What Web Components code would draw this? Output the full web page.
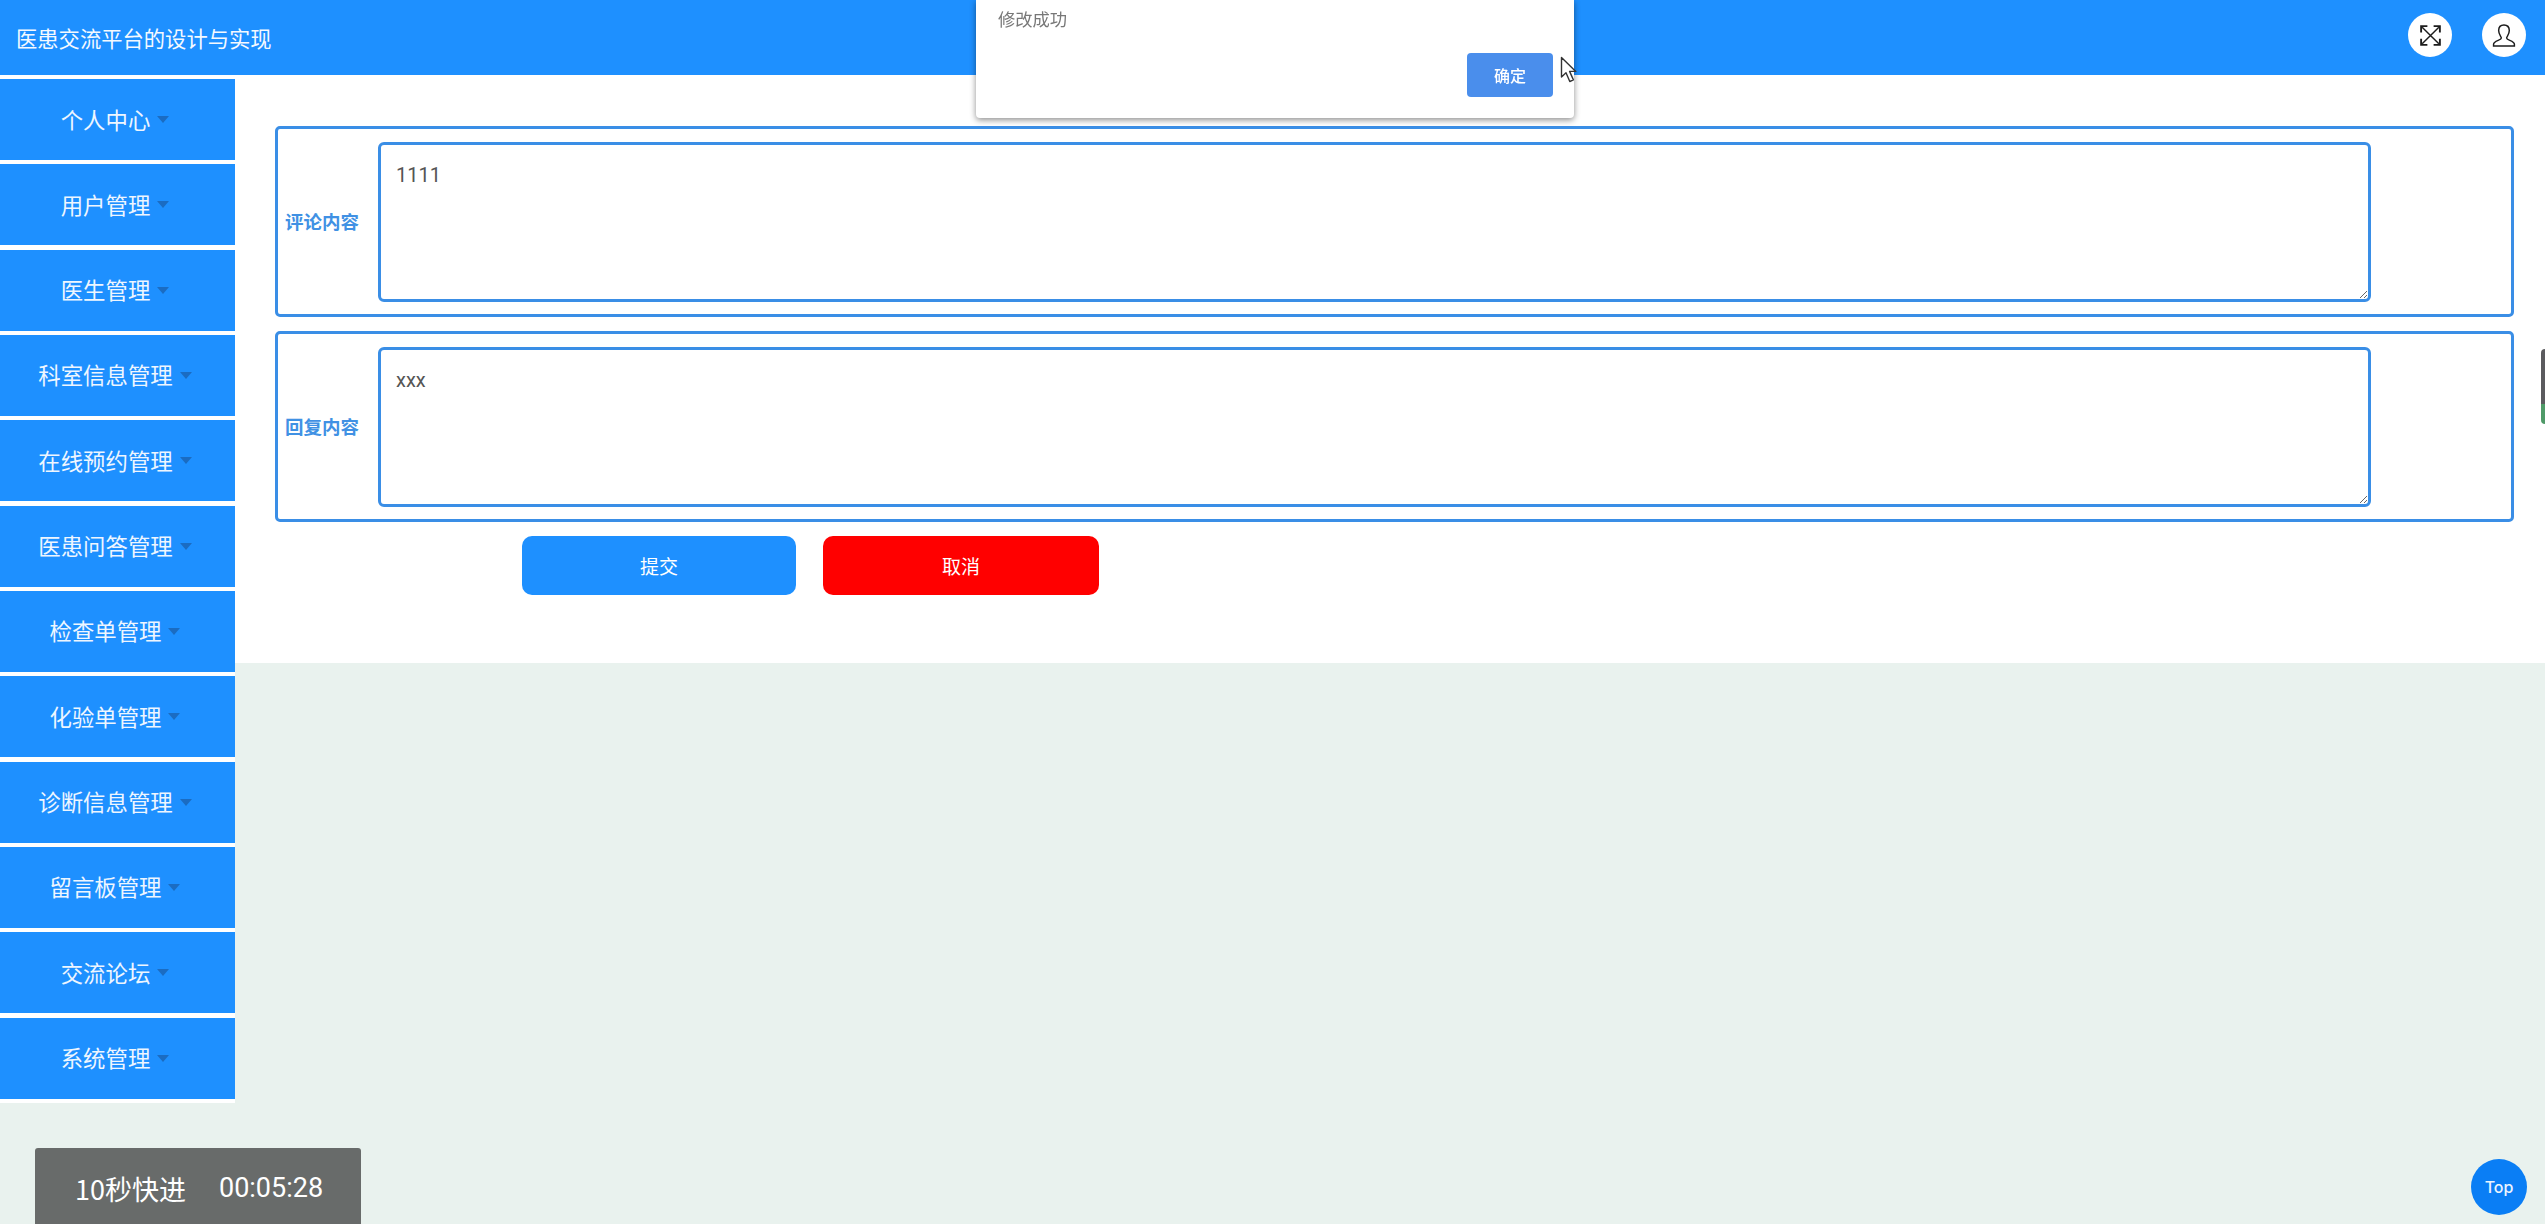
<!DOCTYPE html>
<html lang="zh-CN">
  <head>
    <meta charset="UTF-8" />
    <title>医患交流平台的设计与实现</title>
    <style>
      html, body {
        margin: 0;
        height: 100%;
        background: #e9f2ee;
        font-family: "Noto Sans CJK SC", "Liberation Sans", sans-serif;
      }
      body {
        overflow: hidden;
      }
    </style>
  </head>
  <body>
    <med-app>
      <med-header slot="header" title-text="医患交流平台的设计与实现">
        <round-icon name="expand"></round-icon>
        <round-icon name="user"></round-icon>
      </med-header>
      <side-menu slot="menu">
        <menu-item>个人中心</menu-item>
        <menu-item>用户管理</menu-item>
        <menu-item>医生管理</menu-item>
        <menu-item>科室信息管理</menu-item>
        <menu-item>在线预约管理</menu-item>
        <menu-item>医患问答管理</menu-item>
        <menu-item>检查单管理</menu-item>
        <menu-item>化验单管理</menu-item>
        <menu-item>诊断信息管理</menu-item>
        <menu-item>留言板管理</menu-item>
        <menu-item>交流论坛</menu-item>
        <menu-item>系统管理</menu-item>
      </side-menu>
      <reply-form>
        <form-field label="评论内容" value="1111"></form-field>
        <form-field label="回复内容" value="xxx"></form-field>
        <form-button slot="actions" kind="primary">提交</form-button>
        <form-button slot="actions" kind="danger">取消</form-button>
      </reply-form>
    </med-app>

    <alert-box message="修改成功" action="确定"></alert-box>
    <mouse-pointer></mouse-pointer>
    <video-badge></video-badge>
    <top-button></top-button>
    <scroll-handle></scroll-handle>

    <script>
      class MedApp extends HTMLElement {
        constructor() {
          super();
          this.attachShadow({ mode: 'open' }).innerHTML = `
            <style>
              :host { display: block; }
              .body { display: flex; align-items: flex-start; }
              .main { flex: 1; min-width: 0; background: #fff; }
            </style>
            <slot name="header"></slot>
            <div class="body">
              <slot name="menu"></slot>
              <div class="main"><slot></slot></div>
            </div>`;
        }
      }

      class MedHeader extends HTMLElement {
        constructor() {
          super();
          this.attachShadow({ mode: 'open' }).innerHTML = `
            <style>
              :host {
                display: flex;
                align-items: center;
                justify-content: space-between;
                height: 75px;
                padding: 0 19px 0 16px;
                background: #1e90ff;
                color: #f4f9ff;
              }
              .title { font-size: 21.300px; line-height: 30px; }
              .tools { display: flex; gap: 30px; margin-top: -5px; }
            </style>
            <div class="title">${this.getAttribute('title-text')}</div>
            <div class="tools"><slot></slot></div>`;
        }
      }

      const ICONS = {
        expand: `<path d="M4 4l16 16M20 4L4 20"/><path d="M3 9V3h6M15 3h6v6M21 15v6h-6M9 21H3v-6" stroke-width="1.800"/>`,
        user: `<path d="M9 14.500c0-1.600-2.600-3.200-2.600-7.300C6.400 3.800 8.600 2 11.500 2s5.100 1.800 5.100 5.200c0 4.100-2.600 5.700-2.600 7.300 0 2.200 7.500 2.400 7.500 6v1.500H1.500V20.500c0-3.600 7.500-3.800 7.500-6z"/>`
      };

      class RoundIcon extends HTMLElement {
        constructor() {
          super();
          const name = this.getAttribute('name');
          this.attachShadow({ mode: 'open' }).innerHTML = `
            <style>
              :host {
                display: flex;
                align-items: center;
                justify-content: center;
                width: 44px;
                height: 44px;
                border-radius: 50%;
                background: #fff;
              }
              svg { width: 25px; height: 25px; fill: none; stroke: #1c1c1c; stroke-width: 1.400; }
            </style>
            <svg viewBox="0 0 24 24">${ICONS[name]}</svg>`;
        }
      }

      class SideMenu extends HTMLElement {
        constructor() {
          super();
          this.attachShadow({ mode: 'open' }).innerHTML = `
            <style>
              :host {
                display: flex;
                flex-direction: column;
                flex: none;
                width: 235px;
                padding-top: 4px;
                gap: 4.330px;
                padding-bottom: 4px;
                background: #fff;
              }
            </style>
            <slot></slot>`;
        }
      }

      class MenuItem extends HTMLElement {
        constructor() {
          super();
          this.attachShadow({ mode: 'open' }).innerHTML = `
            <style>
              :host {
                display: flex;
                align-items: center;
                justify-content: center;
                box-sizing: border-box;
                height: 81px;
                padding: 0 5px 2px 0;
                background: #1e90ff;
                color: #eef6ff;
                font-size: 22.400px;
              }
              .caret {
                width: 0;
                height: 0;
                margin: 2px 0 0 7px;
                border-left: 6px solid transparent;
                border-right: 6px solid transparent;
                border-top: 7px solid #1b6cc2;
              }
            </style>
            <slot></slot><span class="caret"></span>`;
        }
      }

      class ReplyForm extends HTMLElement {
        constructor() {
          super();
          this.attachShadow({ mode: 'open' }).innerHTML = `
            <style>
              :host {
                display: flex;
                flex-direction: column;
                gap: 14px;
                padding: 51px 31px 68px 40px;
              }
              .actions {
                display: flex;
                gap: 27px;
                margin-left: 247px;
              }
            </style>
            <slot></slot>
            <div class="actions"><slot name="actions"></slot></div>`;
        }
      }

      class FormField extends HTMLElement {
        constructor() {
          super();
          this.attachShadow({ mode: 'open' }).innerHTML = `
            <style>
              :host {
                display: flex;
                align-items: center;
                box-sizing: border-box;
                height: 191px;
                padding-left: 7px;
                border: 3px solid #3a8ee6;
                border-radius: 5px;
              }
              label {
                flex: none;
                width: 93px;
                margin-top: -2px;
                font-size: 18.500px;
                font-weight: 700;
                color: #4091e4;
              }
              textarea {
                box-sizing: border-box;
                width: 1993px;
                height: 160px;
                padding: 18px 15px;
                margin: 0;
                border: 3px solid #3a8ee6;
                border-radius: 6px;
                outline: none;
                font-family: Roboto, "Noto Sans CJK SC", sans-serif;
                font-size: 20px;
                line-height: 24px;
                color: #555;
                background: #fff;
              }
            </style>
            <label>${this.getAttribute('label')}</label>
            <textarea>${this.getAttribute('value')}</textarea>`;
        }
      }

      class FormButton extends HTMLElement {
        constructor() {
          super();
          const bg = this.getAttribute('kind') === 'danger' ? '#ff0000' : '#1e90ff';
          const width = this.getAttribute('kind') === 'danger' ? 276 : 274;
          this.attachShadow({ mode: 'open' }).innerHTML = `
            <style>
              :host {
                display: flex;
                align-items: center;
                justify-content: center;
                width: ${width}px;
                height: 59px;
                border-radius: 10px;
                background: ${bg};
                color: #fff;
                font-size: 19px;
              }
            </style>
            <slot></slot>`;
        }
      }

      class AlertBox extends HTMLElement {
        constructor() {
          super();
          this.attachShadow({ mode: 'open' }).innerHTML = `
            <style>
              :host {
                position: fixed;
                left: 976px;
                top: 0;
                box-sizing: border-box;
                display: flex;
                flex-direction: column;
                width: 598px;
                height: 118px;
                padding: 6px 21px 21px 22px;
                background: #fff;
                border-radius: 0 0 4px 4px;
                box-shadow: 0 2px 6px rgba(0, 0, 0, .45);
                color: #777;
                font-size: 17.300px;
                line-height: 26px;
              }
              .ok {
                align-self: flex-end;
                box-sizing: border-box;
                display: flex;
                align-items: center;
                justify-content: center;
                width: 86px;
                height: 44px;
                margin-top: 21px;
                border-radius: 4px;
                background: #4a8eec;
                color: #fff;
                font-size: 16px;
                font-weight: 500;
              }
            </style>
            <div>${this.getAttribute('message')}</div>
            <div class="ok">${this.getAttribute('action')}</div>`;
        }
      }

      class MousePointer extends HTMLElement {
        constructor() {
          super();
          this.attachShadow({ mode: 'open' }).innerHTML = `
            <style>
              :host { position: fixed; left: 1560px; top: 56px; width: 18px; height: 28px; }
              svg { display: block; }
            </style>
            <svg width="18" height="28" viewBox="0 0 18 28">
              <path d="M1.500 1.500V21l4.500-4.200L9.800 25.500l3.600-1.600-3.800-8.500h6.200z" fill="#fff" stroke="#333" stroke-width="1.400" stroke-linejoin="round"/>
            </svg>`;
        }
      }

      class VideoBadge extends HTMLElement {
        constructor() {
          super();
          this.attachShadow({ mode: 'open' }).innerHTML = `
            <style>
              :host {
                position: fixed;
                left: 35px;
                bottom: 0;
                box-sizing: border-box;
                display: flex;
                align-items: center;
                gap: 33px;
                width: 326px;
                height: 76px;
                padding: 4px 0 0 40px;
                border-radius: 3px 3px 0 0;
                background: #686b6a;
                color: #fff;
                font-size: 27px;
              }
              .time { font-family: Roboto, sans-serif; font-size: 27px; }
            </style>
            <span>10秒快进</span><span class="time">00:05:28</span>`;
        }
      }

      class TopButton extends HTMLElement {
        constructor() {
          super();
          this.attachShadow({ mode: 'open' }).innerHTML = `
            <style>
              :host {
                position: fixed;
                left: 2471px;
                top: 1159px;
                display: flex;
                align-items: center;
                justify-content: center;
                width: 56px;
                height: 56px;
                border-radius: 50%;
                background: #0a7ef5;
                color: #eaf4ff;
                font-family: Inter, sans-serif;
                font-size: 16px;
                font-weight: 500;
              }
            </style>
            <slot>Top</slot>`;
        }
      }

      class ScrollHandle extends HTMLElement {
        constructor() {
          super();
          this.attachShadow({ mode: 'open' }).innerHTML = `
            <style>
              :host {
                position: fixed;
                right: 0;
                top: 349px;
                width: 4px;
                height: 75px;
                border-radius: 4px 0 0 4px;
                background: linear-gradient(#5b5b5e 74%, #4f9a68 74%);
              }
            </style>`;
        }
      }

      customElements.define('med-app', MedApp);
      customElements.define('med-header', MedHeader);
      customElements.define('round-icon', RoundIcon);
      customElements.define('side-menu', SideMenu);
      customElements.define('menu-item', MenuItem);
      customElements.define('reply-form', ReplyForm);
      customElements.define('form-field', FormField);
      customElements.define('form-button', FormButton);
      customElements.define('alert-box', AlertBox);
      customElements.define('mouse-pointer', MousePointer);
      customElements.define('video-badge', VideoBadge);
      customElements.define('top-button', TopButton);
      customElements.define('scroll-handle', ScrollHandle);
    </script>
  </body>
</html>
